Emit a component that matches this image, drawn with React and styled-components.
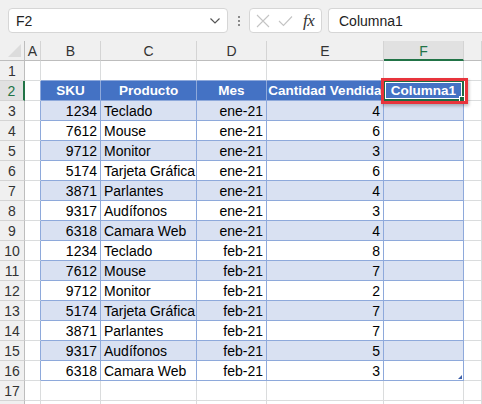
import React from 'react';
import styled, { createGlobalStyle } from 'styled-components';

const Global = createGlobalStyle`
  html, body {
    margin: 0;
    padding: 0;
    background: #f0f0f0;
    overflow: hidden;
  }
  body {
    font-family: "Liberation Sans", Arial, sans-serif;
  }
`;

const Page = styled.div`
  width: 482px;
  height: 404px;
  overflow: hidden;
  background: #f0f0f0;
`;

const FormulaBar = styled.div`
  display: flex;
  align-items: flex-start;
  height: 41px;
  box-sizing: border-box;
  padding: 8px 0 0 8px;
`;

const NameBox = styled.div`
  width: 220px;
  height: 25px;
  box-sizing: border-box;
  background: #fff;
  border: 1px solid #d6d6d6;
  border-radius: 4px;
  display: flex;
  align-items: center;
  justify-content: space-between;
  padding: 0 6px 0 7px;
  font-size: 14px;
  color: #222;
`;

const Dots = styled.div`
  width: 21px;
  height: 25px;
  display: flex;
  flex-direction: column;
  align-items: center;
  justify-content: center;
  gap: 2px;
  span {
    width: 2px;
    height: 2px;
    background: #8a8a8a;
  }
`;

const FxButtons = styled.div`
  width: 73px;
  height: 25px;
  box-sizing: border-box;
  background: #fff;
  border: 1px solid #d6d6d6;
  border-radius: 4px;
  display: flex;
  align-items: center;
  padding: 0 4px 0 6px;
  gap: 8px;
`;

const Fx = styled.span`
  font-family: "Liberation Serif", "Times New Roman", serif;
  font-style: italic;
  font-size: 17px;
  color: #333;
  margin-left: 2px;
  letter-spacing: -0.5px;
`;

const FormulaInput = styled.div`
  margin-left: 6px;
  flex: 1;
  height: 25px;
  box-sizing: border-box;
  background: #fff;
  border: 1px solid #d6d6d6;
  border-right: none;
  border-radius: 4px 0 0 4px;
  display: flex;
  align-items: center;
  padding-left: 10px;
  font-size: 14px;
  color: #222;
`;

const Sheet = styled.div`
  display: grid;
  grid-template-columns: 25px 16px 60px 96px 70px 117px 80px 1fr;
  grid-auto-rows: 20px;
`;

const ColHead = styled.div`
  box-sizing: border-box;
  background: ${p => (p.$active ? '#e1e1e1' : '#f0f0f0')};
  border-right: 1px solid #d4d4d4;
  border-bottom: ${p => (p.$active ? '2px solid #217346' : '1px solid #bdbdbd')};
  display: flex;
  align-items: center;
  justify-content: center;
  font-size: 14px;
  color: ${p => (p.$active ? '#217346' : '#333')};
  padding-top: ${p => (p.$active ? '1px' : '0')};
`;

const Corner = styled.div`
  position: relative;
  box-sizing: border-box;
  background: #f0f0f0;
  border-right: 1px solid #bdbdbd;
  border-bottom: 1px solid #bdbdbd;
  &::after {
    content: '';
    position: absolute;
    right: 3px;
    bottom: 3px;
    width: 0;
    height: 0;
    border-left: 13px solid transparent;
    border-bottom: 13px solid #dcdcdc;
  }
`;

const RowHead = styled.div`
  box-sizing: border-box;
  background: ${p => (p.$active ? '#e1e1e1' : '#f0f0f0')};
  border-right: ${p => (p.$active ? '2px solid #217346' : '1px solid #bdbdbd')};
  border-bottom: 1px solid #d4d4d4;
  display: flex;
  align-items: center;
  justify-content: center;
  font-size: 14px;
  color: ${p => (p.$active ? '#217346' : '#333')};
`;

const Cell = styled.div`
  position: relative;
  z-index: ${p => (p.$top ? 2 : 'auto')};
  box-sizing: border-box;
  background: ${p => p.$bg || '#fff'};
  border-right: 1px solid ${p => p.$br};
  border-bottom: 1px solid ${p => p.$bb};
  display: flex;
  align-items: center;
  justify-content: ${p => p.$align || 'flex-start'};
  padding: 0 3px;
  font-size: ${p => (p.$bold ? '13.5px' : '14px')};
  font-weight: ${p => (p.$bold ? 700 : 400)};
  color: ${p => p.$color || '#000'};
  white-space: nowrap;
`;

const Selected = styled.div`
  position: absolute;
  left: -1px;
  top: -1px;
  right: -1px;
  bottom: -1px;
  border: 2px solid #1e6b41;
  box-shadow: inset 0 0 0 1px #fff;
  pointer-events: none;
  &::after {
    content: '';
    position: absolute;
    right: -3px;
    bottom: -3px;
    width: 4px;
    height: 4px;
    background: #1e6b41;
    border: 1px solid #fff;
  }
`;

const Highlight = styled.div`
  position: absolute;
  left: -3px;
  top: -3px;
  right: -5px;
  bottom: -4px;
  border: 3px solid #e8343c;
  box-shadow: 1px 2px 3px rgba(0, 0, 0, 0.25);
  pointer-events: none;
`;

const ResizeHandle = styled.div`
  position: absolute;
  right: 1px;
  bottom: 1px;
  width: 0;
  height: 0;
  border-left: 4px solid transparent;
  border-bottom: 4px solid #3d5fa8;
`;

const headers = ['SKU', 'Producto', 'Mes', 'Cantidad Vendida', 'Columna1'];

const data = [
  [1234, 'Teclado', 'ene-21', 4],
  [7612, 'Mouse', 'ene-21', 6],
  [9712, 'Monitor', 'ene-21', 3],
  [5174, 'Tarjeta Gráfica', 'ene-21', 6],
  [3871, 'Parlantes', 'ene-21', 4],
  [9317, 'Audífonos', 'ene-21', 3],
  [6318, 'Camara Web', 'ene-21', 4],
  [1234, 'Teclado', 'feb-21', 8],
  [7612, 'Mouse', 'feb-21', 7],
  [9712, 'Monitor', 'feb-21', 2],
  [5174, 'Tarjeta Gráfica', 'feb-21', 7],
  [3871, 'Parlantes', 'feb-21', 7],
  [9317, 'Audífonos', 'feb-21', 5],
  [6318, 'Camara Web', 'feb-21', 3]
];

const letters = ['A', 'B', 'C', 'D', 'E', 'F', ''];
const GRID = '#dadcdd';
const TBL = '#8ea9db';
const LAST = data.length + 2;

function renderCell(r, c) {
  // c: 1 = A ... 6 = F, 7 = G
  const inTableCol = c >= 2 && c <= 6;
  const inTableRow = r >= 2 && r <= LAST;
  const inTable = inTableCol && inTableRow;
  const br = inTable || (c === 1 && inTableRow) ? TBL : GRID;
  const bb = (inTable || (r === 1 && inTableCol)) ? TBL : GRID;
  const key = `${r}-${c}`;

  if (!inTable) {
    return <Cell key={key} $br={br} $bb={bb} />;
  }

  if (r === 2) {
    const active = c === 6;
    return (
      <Cell key={key} $top={active} $br={br} $bb={bb} $bg="#4472c4" $bold $color="#fff" $align="center">
        {headers[c - 2]}
        {active && (
          <>
            <Selected />
            <Highlight />
          </>
        )}
      </Cell>
    );
  }

  const row = data[r - 3];
  const bg = r % 2 === 1 ? '#d9e1f2' : '#fff';
  const value = c === 6 ? '' : row[c - 2];
  const align = c === 3 ? 'flex-start' : 'flex-end';
  return (
    <Cell key={key} $br={br} $bb={bb} $bg={bg} $align={align}>
      {value}
      {c === 6 && r === LAST && <ResizeHandle />}
    </Cell>
  );
}

export default function App() {
  const rows = [];
  for (let r = 1; r <= 18; r++) {
    rows.push(
      <RowHead key={`h${r}`} $active={r === 2}>
        {r <= 17 ? r : ''}
      </RowHead>
    );
    for (let c = 1; c <= 7; c++) rows.push(renderCell(r, c));
  }

  return (
    <Page>
      <Global />
      <FormulaBar>
        <NameBox>
          <span>F2</span>
          <svg width="12" height="8" viewBox="0 0 12 8">
            <polyline points="1.5,1.5 6,6 10.5,1.5" fill="none" stroke="#555" strokeWidth="1.2" />
          </svg>
        </NameBox>
        <Dots>
          <span />
          <span />
          <span />
        </Dots>
        <FxButtons>
          <svg width="14" height="14" viewBox="0 0 14 14">
            <path d="M1 1 L13 13 M13 1 L1 13" stroke="#c4c4c4" strokeWidth="1.1" />
          </svg>
          <svg width="15" height="12" viewBox="0 0 15 12">
            <polyline points="1,6 5.5,10.5 14,1.5" fill="none" stroke="#c4c4c4" strokeWidth="1.1" />
          </svg>
          <Fx>fx</Fx>
        </FxButtons>
        <FormulaInput>Columna1</FormulaInput>
      </FormulaBar>
      <Sheet>
        <Corner />
        {letters.map((l, i) => (
          <ColHead key={l + i} $active={l === 'F'}>
            {l}
          </ColHead>
        ))}
        {rows}
      </Sheet>
    </Page>
  );
}
